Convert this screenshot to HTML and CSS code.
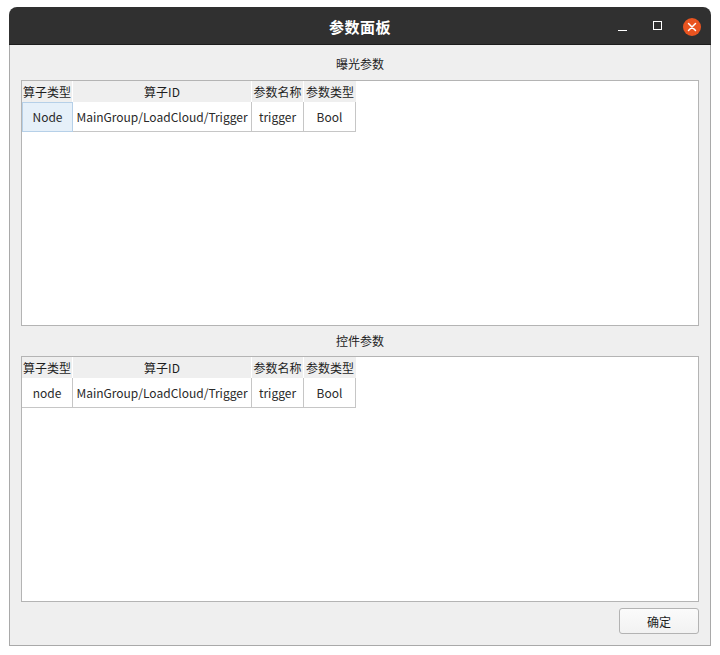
FILE: index.html
```html
<!DOCTYPE html>
<html lang="zh">
<head>
<meta charset="utf-8">
<title>参数面板</title>
<link rel="stylesheet" href="styles.css">
</head>
<body>
<div class="window">
  <div class="titlebar">
    <span class="title">参数面板</span>
    <div class="controls">
      <span class="ctl min"><svg width="10" height="10" viewBox="0 0 10 10"><line x1="0" y1="8.5" x2="9" y2="8.5" stroke="#fff" stroke-width="1"/></svg></span>
      <span class="ctl max"><svg width="10" height="10" viewBox="0 0 10 10"><rect x="0.5" y="0.5" width="8" height="8" fill="none" stroke="#fff" stroke-width="1"/></svg></span>
      <span class="ctl close"><svg width="18" height="18" viewBox="0 0 18 18"><circle cx="9" cy="9" r="9" fill="#e95420"/><path d="M5.5 5.5 L12.5 12.5 M12.5 5.5 L5.5 12.5" stroke="#fff" stroke-width="1.5" stroke-linecap="round"/></svg></span>
    </div>
  </div>
  <div class="content">
    <div class="section-label">曝光参数</div>
    <div class="frame">
      <div class="grid">
        <div class="hcell">算子类型</div>
        <div class="hcell">算子ID</div>
        <div class="hcell">参数名称</div>
        <div class="hcell">参数类型</div>
        <div class="cell selected">Node</div>
        <div class="cell">MainGroup/LoadCloud/Trigger</div>
        <div class="cell">trigger</div>
        <div class="cell">Bool</div>
      </div>
    </div>
    <div class="section-label second">控件参数</div>
    <div class="frame">
      <div class="grid">
        <div class="hcell">算子类型</div>
        <div class="hcell">算子ID</div>
        <div class="hcell">参数名称</div>
        <div class="hcell">参数类型</div>
        <div class="cell">node</div>
        <div class="cell">MainGroup/LoadCloud/Trigger</div>
        <div class="cell">trigger</div>
        <div class="cell">Bool</div>
      </div>
    </div>
    <div class="footer">
      <button class="btn">确定</button>
    </div>
  </div>
</div>
</body>
</html>
```
FILE: styles.css
```css
html, body {
  margin: 0;
  padding: 0;
  background: #ffffff;
}
body {
  font-family: "Noto Sans CJK SC", "Noto Sans", sans-serif;
  font-size: 12px;
  color: #2b2b2b;
  padding-top: 7px;
}
.window {
  margin-left: 9px;
  width: 702px;
  height: 639px;
  display: flex;
  flex-direction: column;
}
.titlebar {
  flex: 0 0 auto;
  height: 37px;
  background: #303030;
  border-radius: 8px 8px 0 0;
  border-bottom: 1px solid #1c1c1c;
  position: relative;
  display: flex;
  align-items: center;
  justify-content: center;
}
.title {
  color: #ffffff;
  font-weight: bold;
  font-size: 15px;
  line-height: 20px;
  letter-spacing: 0.5px;
  margin-top: 2px;
}
.controls {
  position: absolute;
  right: 10px;
  top: 0;
  height: 39px;
  display: flex;
  align-items: center;
}
.ctl {
  display: flex;
  align-items: center;
  justify-content: center;
}
.ctl.min { width: 10px; margin-right: 25px; margin-top: 1px; }
.ctl.max { width: 10px; margin-right: 20px; margin-top: -1px; }
.ctl.close { width: 18px; }
.content {
  flex: 1 1 auto;
  min-height: 0;
  background: #efefef;
  border: 1px solid #a9a9a9;
  border-top: none;
  padding: 0 11px 10px 11px;
  display: flex;
  flex-direction: column;
}
.section-label {
  flex: 0 0 auto;
  box-sizing: border-box;
  height: 35px;
  padding-top: 10px;
  line-height: 17px;
  text-align: center;
  font-size: 12px;
  color: #222;
}
.section-label.second {
  height: 30px;
  padding-top: 6px;
}
.frame {
  flex: 0 0 auto;
  height: 244px;
  background: #ffffff;
  border: 1px solid #b4b4b4;
}
.grid {
  display: grid;
  grid-template-columns: 51px 179px 52px 52px;
  grid-template-rows: 21px 30px;
}
.hcell {
  background: #efefef;
  border-right: 1px solid #ffffff;
  text-align: center;
  line-height: 21px;
  font-size: 12px;
  color: #1e1e1e;
  white-space: nowrap;
}
.hcell:nth-child(4) { border-right: none; }
.cell {
  border-right: 1px solid #c6c6c6;
  border-bottom: 1px solid #c6c6c6;
  text-align: center;
  line-height: 29px;
  font-size: 12px;
  color: #2a2a2a;
  white-space: nowrap;
  overflow: hidden;
}
.cell.selected {
  background: #e6f0f9;
  border: 1px solid #b6d0e8;
  line-height: 28px;
}
.footer {
  flex: 0 0 auto;
  display: flex;
  justify-content: flex-end;
  padding-top: 6px;
}
.btn {
  width: 80px;
  height: 26px;
  border: 1px solid #b3b3b3;
  border-radius: 3px;
  background: linear-gradient(#fbfbfb, #f2f2f2);
  font-family: "Noto Sans CJK SC", sans-serif;
  font-size: 12px;
  color: #1e1e1e;
  padding: 0;
}
```
